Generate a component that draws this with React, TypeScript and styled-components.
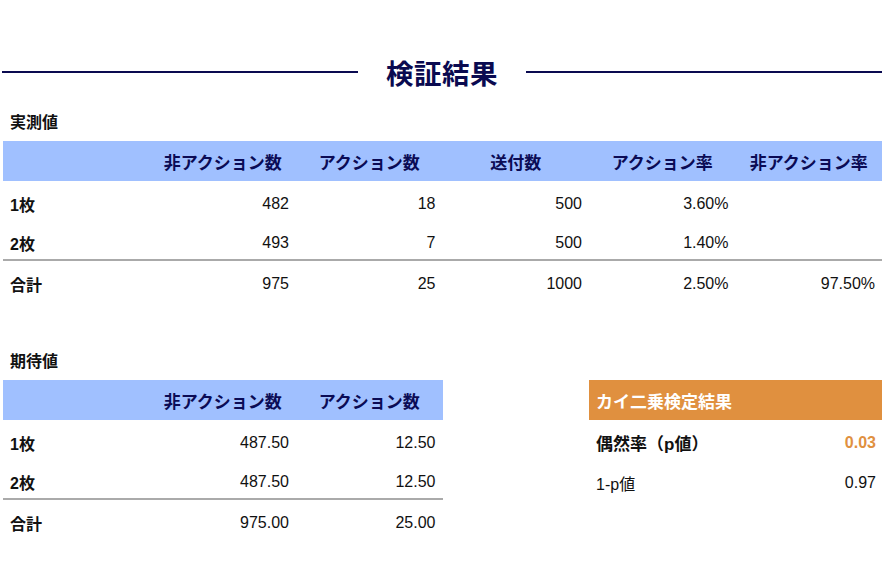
import React from "react";
import styled, { createGlobalStyle } from "styled-components";

const Global = createGlobalStyle`
  html, body { margin: 0; padding: 0; background: #fff; }
  body { font-family: "Liberation Sans", Arial, "Noto Sans CJK JP", sans-serif; color: #111; }
`;

const Page = styled.div`
  width: 879px;
  padding: 48px 2px 0 3px;
`;

const TitleBar = styled.div`
  display: flex;
  align-items: center;
  gap: 28px;
  height: 48px;
  margin-left: -1px;
`;

const Rule = styled.div`
  flex: 1;
  height: 2px;
  background: #0a0a50;
`;

const Title = styled.h1`
  margin: 0;
  font-size: 27.5px;
  font-weight: 700;
  color: #0a0a50;
  letter-spacing: 0.5px;
`;

const SectionLabel = styled.div<{ $top: number }>`
  margin-top: ${(p) => p.$top}px;
  height: 20px;
  line-height: 20px;
  padding-left: 7px;
  font-size: 16px;
  font-weight: 700;
  margin-bottom: 8px;
`;

const Grid = styled.div<{ $cols: number }>`
  display: grid;
  grid-template-columns: repeat(${(p) => p.$cols}, 1fr);
`;

const HeadRow = styled(Grid)`
  height: 40px;
  align-items: center;
  background: #a0c0ff;
`;

const HeadCell = styled.div`
  text-align: center;
  font-size: 17px;
  font-weight: 700;
  color: #0b0b55;
`;

const BodyRow = styled(Grid)<{ $divider?: boolean }>`
  box-sizing: border-box;
  height: 40px;
  padding-top: 5px;
  align-items: center;
  border-bottom: ${(p) => (p.$divider ? "2px solid #aaa" : "none")};
`;

const Cell = styled.div<{ $label?: boolean }>`
  font-size: 16px;
  padding: 0 7px;
  text-align: ${(p) => (p.$label ? "left" : "right")};
  font-weight: ${(p) => (p.$label ? 700 : 400)};
`;

const Lower = styled.div`
  display: grid;
  grid-template-columns: repeat(6, 1fr);
  align-items: start;
`;

const Left = styled.div`
  grid-column: 1 / span 3;
`;

const Chi = styled.div`
  grid-column: 5 / span 2;
  margin-top: 79px;
`;

const ChiHead = styled.div`
  height: 40px;
  display: flex;
  align-items: center;
  padding-left: 7px;
  background: #e0903f;
  color: #fff;
  font-size: 17px;
  font-weight: 700;
`;

const ChiRow = styled.div<{ $bold?: boolean }>`
  height: 40px;
  box-sizing: border-box;
  padding: 5px 6px 0 7px;
  display: flex;
  align-items: center;
  justify-content: space-between;
  font-size: ${(p) => (p.$bold ? 17 : 16)}px;
  font-weight: ${(p) => (p.$bold ? 700 : 400)};
`;

const Val = styled.span<{ $accent?: boolean }>`
  font-size: 16px;
  color: ${(p) => (p.$accent ? "#e0903f" : "#111")};
`;

const measured = [
  ["1枚", "482", "18", "500", "3.60%", ""],
  ["2枚", "493", "7", "500", "1.40%", ""],
  ["合計", "975", "25", "1000", "2.50%", "97.50%"],
];

const expected = [
  ["1枚", "487.50", "12.50"],
  ["2枚", "487.50", "12.50"],
  ["合計", "975.00", "25.00"],
];

function Rows({ data }: { data: string[][] }) {
  return (
    <>
      {data.map((r, i) => (
        <BodyRow key={i} $cols={r.length} $divider={i === 1}>
          {r.map((c, j) => (
            <Cell key={j} $label={j === 0}>
              {c}
            </Cell>
          ))}
        </BodyRow>
      ))}
    </>
  );
}

export default function App() {
  return (
    <>
      <Global />
      <Page>
        <TitleBar>
          <Rule />
          <Title>検証結果</Title>
          <Rule />
        </TitleBar>
        <SectionLabel $top={17}>実測値</SectionLabel>
        <HeadRow $cols={6}>
          <HeadCell />
          <HeadCell>非アクション数</HeadCell>
          <HeadCell>アクション数</HeadCell>
          <HeadCell>送付数</HeadCell>
          <HeadCell>アクション率</HeadCell>
          <HeadCell>非アクション率</HeadCell>
        </HeadRow>
        <Rows data={measured} />
        <Lower>
          <Left>
            <SectionLabel $top={51}>期待値</SectionLabel>
            <HeadRow $cols={3}>
              <HeadCell />
              <HeadCell>非アクション数</HeadCell>
              <HeadCell>アクション数</HeadCell>
            </HeadRow>
            <Rows data={expected} />
          </Left>
          <Chi>
            <ChiHead>カイ二乗検定結果</ChiHead>
            <ChiRow $bold>
              <span>偶然率（p値）</span>
              <Val $accent>0.03</Val>
            </ChiRow>
            <ChiRow>
              <span>1-p値</span>
              <Val>0.97</Val>
            </ChiRow>
          </Chi>
        </Lower>
      </Page>
    </>
  );
}
